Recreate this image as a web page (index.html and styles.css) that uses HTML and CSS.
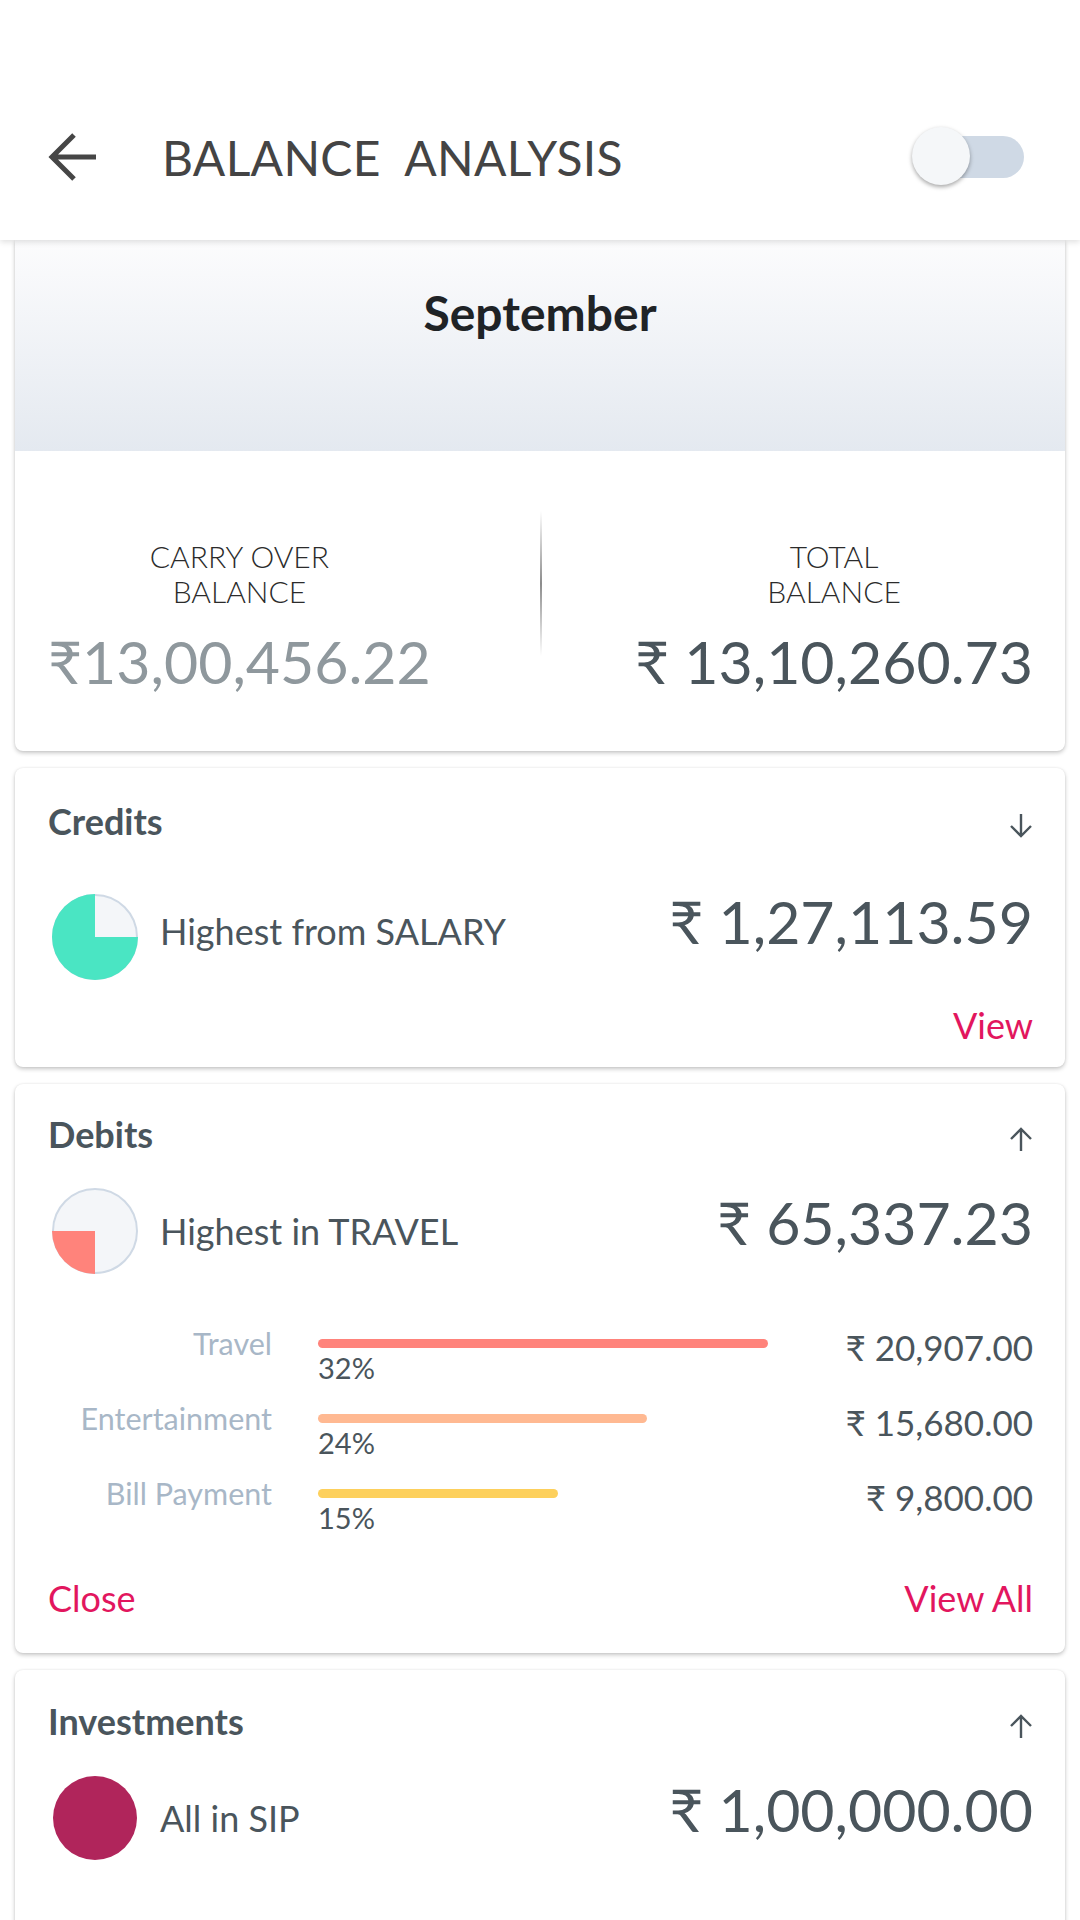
FILE: index.html
```html
<!DOCTYPE html>
<html lang="en">
<head>
    <meta charset="UTF-8">
    <meta name="viewport" content="width=device-width, initial-scale=1.0">
    <title>Balance Analysis</title>
    <link rel="stylesheet" href="styles.css">
</head>
<body>

<header class="topbar">
    <svg class="back" width="52" height="50" viewBox="0 0 52 50">
        <path d="M5 25H50M28 3L6 25L28 47" fill="none" stroke="#464646" stroke-width="5"/>
    </svg>
    <h1 class="title">BALANCE&nbsp; ANALYSIS</h1>
    <div class="toggle">
        <div class="toggle-track"></div>
        <div class="toggle-knob"></div>
    </div>
</header>

<main class="cards">

    <!-- month summary -->
    <section class="card summary">
        <div class="month">September</div>
        <div class="balance">
            <div class="bal-col left">
                <div class="bal-label">CARRY OVER<br>BALANCE</div>
                <div class="bal-amount muted">₹13,00,456.22</div>
            </div>
            <div class="divider"></div>
            <div class="bal-col right">
                <div class="bal-label">TOTAL<br>BALANCE</div>
                <div class="bal-amount">₹ 13,10,260.73</div>
            </div>
        </div>
    </section>

    <!-- credits -->
    <section class="card credits">
        <div class="card-head">
            <h2>Credits</h2>
            <svg class="arrow" width="26" height="26" viewBox="0 0 26 26">
                <path d="M13 1V23M3 13L13 23L23 13" fill="none" stroke="#4a555c" stroke-width="2.4"/>
            </svg>
        </div>
        <div class="summary-row">
            <svg class="pie" width="88" height="88" viewBox="0 0 88 88">
                <circle cx="44" cy="44" r="42" fill="#f4f6f9" stroke="#cfd9e5" stroke-width="2"/>
                <path d="M44 44L44 1A43 43 0 1 0 87 44Z" fill="#4ae5c3"/>
            </svg>
            <span class="row-text">Highest from SALARY</span>
            <span class="big-amount">₹ 1,27,113.59</span>
        </div>
        <div class="card-foot end">
            <a class="link">View</a>
        </div>
    </section>

    <!-- debits -->
    <section class="card debits">
        <div class="card-head">
            <h2>Debits</h2>
            <svg class="arrow" width="26" height="26" viewBox="0 0 26 26">
                <path d="M13 25V3M3 13L13 3L23 13" fill="none" stroke="#4a555c" stroke-width="2.4"/>
            </svg>
        </div>
        <div class="summary-row">
            <svg class="pie" width="88" height="88" viewBox="0 0 88 88">
                <circle cx="44" cy="44" r="42" fill="#f4f6f9" stroke="#cfd9e5" stroke-width="2"/>
                <path d="M44 44L1 44A43 43 0 0 0 44 87Z" fill="#ff837b"/>
            </svg>
            <span class="row-text">Highest in TRAVEL</span>
            <span class="big-amount">₹ 65,337.23</span>
        </div>

        <div class="bars">
            <div class="bar-row">
                <div class="bar-label">Travel</div>
                <div class="bar-cell">
                    <div class="bar travel" style="width: 450px"></div>
                    <div class="bar-pct">32%</div>
                </div>
                <div class="bar-amount">₹ 20,907.00</div>
            </div>
            <div class="bar-row">
                <div class="bar-label">Entertainment</div>
                <div class="bar-cell">
                    <div class="bar fun" style="width: 329px"></div>
                    <div class="bar-pct">24%</div>
                </div>
                <div class="bar-amount">₹ 15,680.00</div>
            </div>
            <div class="bar-row">
                <div class="bar-label">Bill Payment</div>
                <div class="bar-cell">
                    <div class="bar bills" style="width: 240px"></div>
                    <div class="bar-pct">15%</div>
                </div>
                <div class="bar-amount">₹ 9,800.00</div>
            </div>
        </div>

        <div class="card-foot">
            <a class="link">Close</a>
            <a class="link">View All</a>
        </div>
    </section>

    <!-- investments -->
    <section class="card investments">
        <div class="card-head">
            <h2>Investments</h2>
            <svg class="arrow" width="26" height="26" viewBox="0 0 26 26">
                <path d="M13 25V3M3 13L13 3L23 13" fill="none" stroke="#4a555c" stroke-width="2.4"/>
            </svg>
        </div>
        <div class="summary-row">
            <svg class="pie" width="88" height="88" viewBox="0 0 88 88">
                <circle cx="44" cy="44" r="42" fill="#b0255b"/>
            </svg>
            <span class="row-text">All in SIP</span>
            <span class="big-amount">₹ 1,00,000.00</span>
        </div>
    </section>

</main>

</body>
</html>
```

FILE: styles.css
```css
body {
    font-family: Lato, "Open Sans", sans-serif;
    background-color: #ffffff;
    color: #4a555c;
    margin: 0;
    padding: 0;
    width: 1080px;
    height: 1920px;
    overflow: hidden;
}

.topbar {
    position: relative;
    z-index: 2;
    height: 240px;
    box-sizing: border-box;
    padding-top: 74px;
    display: flex;
    align-items: center;
    background-color: #ffffff;
    box-shadow: 0 2px 6px rgba(0, 0, 0, 0.13);
}

.back {
    margin-left: 46px;
}

.title {
    margin: 0 0 0 64px;
    font-size: 48px;
    font-weight: 400;
    color: #444444;
    letter-spacing: 0.3px;
}

.toggle {
    position: relative;
    width: 112px;
    height: 60px;
    margin-left: auto;
    margin-right: 56px;
}

.toggle-track {
    position: absolute;
    right: 0;
    top: 9px;
    width: 90px;
    height: 42px;
    border-radius: 21px;
    background-color: #cfd9e5;
}

.toggle-knob {
    position: absolute;
    left: 0;
    top: 0;
    width: 58px;
    height: 58px;
    border-radius: 50%;
    background-color: #f5f7f9;
    box-shadow: 0 2px 4px rgba(0, 0, 0, 0.35);
}

.cards {
    padding: 0 15px;
    display: flex;
    flex-direction: column;
    gap: 17px;
}

.card {
    background-color: #ffffff;
    border-radius: 8px;
    box-shadow: 0 2px 4px rgba(0, 0, 0, 0.22), 0 0 2px rgba(0, 0, 0, 0.08);
    padding: 0 32px 0 33px;
}

.summary {
    padding: 0;
    border-radius: 0 0 8px 8px;
}

.month {
    height: 211px;
    box-sizing: border-box;
    padding-top: 44px;
    text-align: center;
    font-size: 48px;
    font-weight: 700;
    line-height: 57px;
    color: #1f2326;
    background: linear-gradient(to bottom, #fcfcfd, #e4e9f0);
}

.balance {
    display: grid;
    grid-template-columns: 1fr 2px 1fr;
    padding: 88px 32px 53px 33px;
}

.bal-col {
    text-align: center;
}

.bal-col.left {
    justify-self: start;
}

.bal-col.right {
    justify-self: end;
}

.bal-label {
    font-size: 30px;
    font-weight: 300;
    line-height: 35px;
    color: #2b2b2b;
    margin-bottom: 17px;
}

.bal-amount {
    font-size: 59px;
    line-height: 72px;
    color: #4a555c;
}

.bal-amount.muted {
    color: #8f989d;
}

.divider {
    height: 145px;
    margin-top: -28px;
    background: linear-gradient(to bottom, rgba(140, 140, 140, 0), #8c8c8c 50%, rgba(140, 140, 140, 0));
}

.card-head {
    display: flex;
    justify-content: space-between;
    align-items: center;
}

.card-head h2 {
    margin: 0;
    font-size: 36px;
    font-weight: 700;
    line-height: 43px;
    color: #4a555c;
}

.arrow {
    margin-right: -1px;
    margin-top: 8px;
}

.summary-row {
    display: flex;
    align-items: center;
}

.pie {
    margin-left: 3px;
    margin-right: 21px;
}

.row-text {
    font-size: 36px;
}

.big-amount {
    margin-left: auto;
    align-self: flex-start;
    font-size: 59px;
    line-height: 72px;
}

.credits {
    padding-top: 32px;
    padding-bottom: 20px;
}

.credits .summary-row {
    margin-top: 50px;
}

.credits .row-text {
    margin-bottom: 12px;
}

.credits .big-amount {
    margin-top: -7px;
}

.debits {
    padding-top: 29px;
    padding-bottom: 33px;
}

.debits .summary-row,
.investments .summary-row {
    margin-top: 31px;
}

.investments {
    padding-top: 30px;
    height: 400px;
}

.bars {
    margin-top: 50px;
    display: flex;
    flex-direction: column;
    gap: 15px;
}

.bar-row {
    display: grid;
    grid-template-columns: 224px 460px 1fr;
    column-gap: 46px;
    align-items: start;
}

.bar-label {
    text-align: right;
    font-size: 30.5px;
    line-height: 36px;
    color: #a8b7c7;
}

.bar-cell {
    padding-top: 14px;
}

.bar {
    height: 9px;
    border-radius: 5px;
}

.bar.travel {
    background-color: #ff837b;
}

.bar.fun {
    background-color: #ffb992;
}

.bar.bills {
    background-color: #fdd05c;
}

.bar-pct {
    margin-top: 3px;
    font-size: 29px;
    line-height: 34px;
    color: #4a555c;
}

.bar-amount {
    padding-top: 1px;
    text-align: right;
    font-size: 35px;
    line-height: 42px;
}

.card-foot {
    display: flex;
    justify-content: space-between;
    margin-top: 42px;
}

.card-foot.end {
    justify-content: flex-end;
    margin-top: 23px;
}

.link {
    font-size: 36px;
    line-height: 43px;
    color: #e2165e;
}
```
